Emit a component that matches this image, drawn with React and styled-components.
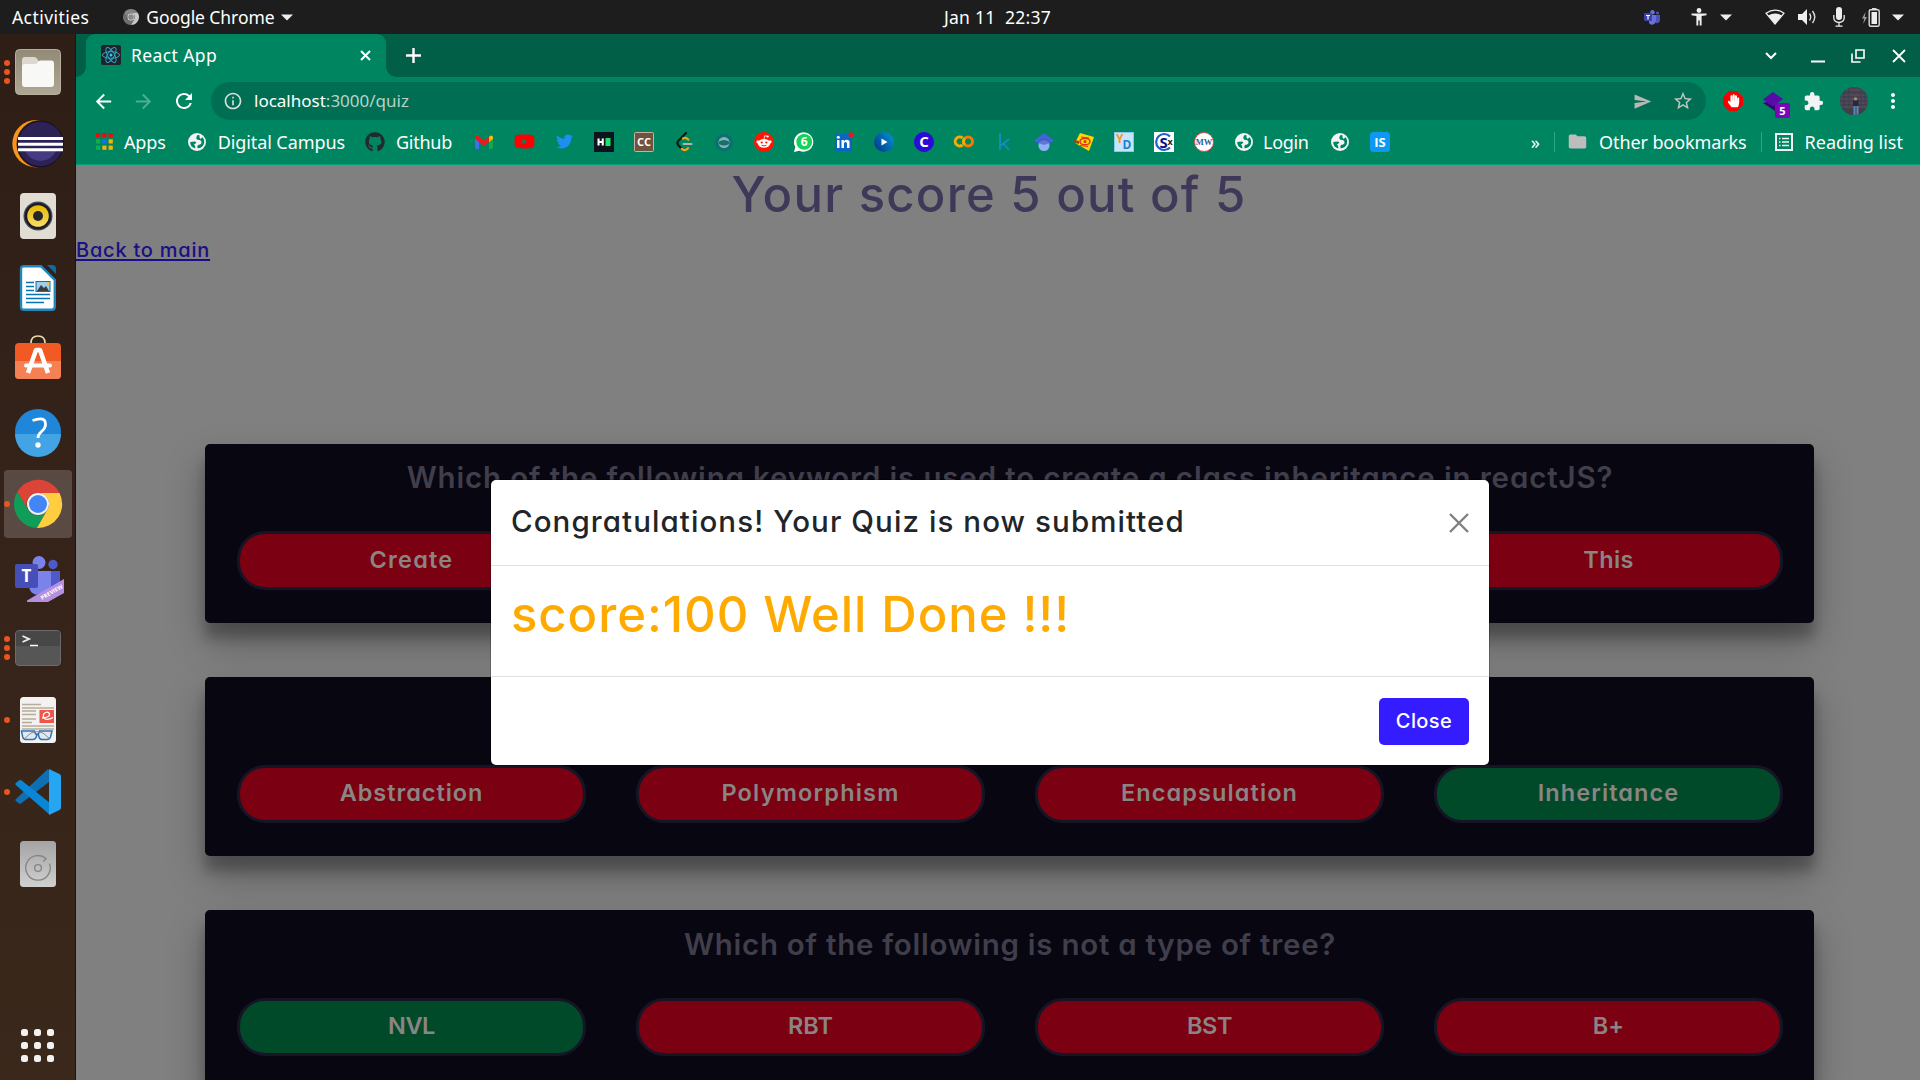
import React from "react";
import styled, { createGlobalStyle } from "styled-components";
import { FaGithub, FaYoutube, FaTwitter, FaHandPaper } from "react-icons/fa";
import { MdExtension, MdStarBorder, MdSend, MdRefresh, MdArrowBack, MdArrowForward, MdInfoOutline, MdFolder, MdMoreVert } from "react-icons/md";

const UI = `"Noto Sans", "Open Sans", sans-serif`;
const BODY = `Inter, "Open Sans", sans-serif`;

const Global = createGlobalStyle`
  * { box-sizing: border-box; }
  html, body { margin: 0; padding: 0; background: #808080; overflow: hidden; }
  svg { display: block; flex: none; overflow: visible; }
`;

const Desktop = styled.div`
  width: 1920px;
  height: 1080px;
  display: flex;
  flex-direction: column;
  overflow: hidden;
  position: relative;
  font-family: ${UI};
`;

const Text = styled.span`
  white-space: pre;
  font-size: ${(p) => p.$size || 18}px;
  letter-spacing: ${(p) => p.$ls || 0}px;
  color: ${(p) => p.$color || "#fff"};
  line-height: 24px;
`;

/* ---------- system bar ---------- */
const SystemBar = styled.header`
  height: 34px;
  flex: none;
  background: #1d1d1d;
  display: grid;
  grid-template-columns: 932px auto 1fr;
  align-items: center;
  padding: 0 16px 0 12px;
`;
const SysLeft = styled.div`
  display: flex;
  align-items: center;
`;
const SysRight = styled(SysLeft)`
  justify-content: flex-end;
`;
const Gap = styled.i`
  flex: none;
  width: ${(p) => p.$w}px;
`;

/* ---------- dock ---------- */
const Main = styled.div`
  flex: 1;
  display: flex;
  min-height: 0;
`;
const Dock = styled.nav`
  width: 76px;
  flex: none;
  background: linear-gradient(#2e1e15, #35231a 45%, #3a281b);
  border-right: 1px solid #1b1410;
  padding-top: 2px;
  display: flex;
  flex-direction: column;
`;
const DockItem = styled.div`
  height: 72px;
  flex: none;
  display: flex;
  align-items: center;
  justify-content: center;
  position: relative;
`;
const DockTile = styled.div`
  width: 68px;
  height: 68px;
  margin-left: 1px;
  padding-top: ${(p) => Math.max(0, p.$shift) * 2}px;
  padding-bottom: ${(p) => Math.max(0, -p.$shift) * 2}px;
  border-radius: 4px;
  display: flex;
  align-items: center;
  justify-content: center;
  background: ${(p) => (p.$active ? "rgba(255,255,255,.18)" : "transparent")};
`;
const Dots = styled.div`
  position: absolute;
  left: 4px;
  top: 0;
  bottom: 0;
  display: flex;
  flex-direction: column;
  justify-content: center;
  gap: 3px;
`;
const Dot = styled.i`
  width: 6px;
  height: 6px;
  border-radius: 50%;
  background: #e95420;
`;
const AppGrid = styled.div`
  margin: auto 0 18px 21px;
  display: grid;
  grid-template-columns: repeat(3, 7px);
  gap: 6px 6px;
`;
const GridDot = styled.i`
  height: 7px;
  border-radius: 2.5px;
  background: #f2f2f2;
`;

/* ---------- browser ---------- */
const Browser = styled.div`
  flex: 1;
  min-width: 0;
  display: flex;
  flex-direction: column;
`;
const TabStrip = styled.div`
  height: 43px;
  flex: none;
  background: #005f46;
  display: flex;
  align-items: center;
`;
const Flare = styled.i`
  width: 10px;
  height: 43px;
  flex: none;
  background: radial-gradient(circle at ${(p) => (p.$right ? "100%" : "0")} calc(100% - 10px), transparent 9.5px, #008561 10px);
  clip-path: inset(33px 0 0 0);
`;
const Tab = styled.div`
  width: 300px;
  height: 43px;
  flex: none;
  border-radius: 9px 9px 0 0;
  background: #008561;
  display: flex;
  align-items: center;
  justify-content: space-between;
  padding: 0 15px 1px;
`;
const TabLabel = styled.div`
  display: flex;
  align-items: center;
  gap: 10px;
`;
const RightGroup = styled.div`
  margin-left: auto;
  display: flex;
  align-items: center;
`;
const WinControls = styled(RightGroup)`
  padding-right: 14px;
`;
const Toolbar = styled.div`
  height: 49px;
  flex: none;
  background: #008561;
  display: flex;
  align-items: center;
  padding: 0 14px 1px 16px;
`;
const Omnibox = styled.div`
  width: 1495px;
  flex: none;
  height: 38px;
  border-radius: 19px;
  background: #006e52;
  display: flex;
  align-items: center;
  padding: 0 12px;
`;
const Bookmarks = styled.div`
  height: 39px;
  flex: none;
  background: #008561;
  border-bottom: 1px solid #00a07a;
  display: flex;
  align-items: center;
  padding: 0 17px 7px 20px;
`;
const Favicons = styled.div`
  display: flex;
  align-items: center;
  margin-left: 12px;
`;
const FavCell = styled.div`
  width: 40px;
  display: flex;
  justify-content: center;
`;
const Separator = styled.i`
  width: 1px;
  height: 20px;
  background: #2fa585;
`;
const ExtBadge = styled.div`
  position: absolute;
  left: 12px;
  top: 12px;
  width: 15px;
  height: 15px;
  border-radius: 2px;
  background: #7b06b8;
  color: #fff;
  font: 700 11px/15px ${UI};
  text-align: center;
`;
const Ext = styled.div`
  position: relative;
  width: 20px;
  height: 20px;
`;

/* ---------- page ---------- */
const Page = styled.main`
  flex: 1;
  min-height: 0;
  overflow: hidden;
  background: #808080;
  font-family: ${BODY};
  font-feature-settings: "cv11", "calt" 0;
  display: flex;
  flex-direction: column;
`;
const Score = styled.h1`
  margin: 0;
  padding-right: 18px;
  text-align: center;
  font-size: 49px;
  font-weight: 500;
  line-height: 59px;
  letter-spacing: 1.25px;
  color: #3f3858;
  white-space: pre;
`;
const BackLink = styled.a`
  align-self: flex-start;
  margin-top: 11px;
  font-size: 20px;
  font-weight: 500;
  line-height: 30px;
  letter-spacing: 0.78px;
  color: #1a0f86;
  text-decoration: underline;
  text-underline-offset: 2px;
  white-space: pre;
`;
const Cards = styled.div`
  margin: 178.8px 106px 0 129px;
  display: flex;
  flex-direction: column;
  gap: 54.5px;
`;
const Card = styled.section`
  height: 178.8px;
  flex: none;
  border-radius: 5px;
  background: #070611;
  padding: 15.5px 31px 0 32px;
  box-shadow: 0 19px 38px rgba(0, 0, 0, 0.3), 0 15px 12px rgba(0, 0, 0, 0.22);
`;
const Question = styled.h3`
  margin: 0 0 36px;
  height: 36px;
  line-height: 36px;
  font-size: 29.5px;
  font-weight: 600;
  letter-spacing: ${(p) => p.$ls}px;
  text-align: center;
  color: #413e4c;
  white-space: pre;
`;
const Answers = styled.div`
  display: grid;
  grid-template-columns: repeat(4, 1fr);
  column-gap: 50px;
`;
const Answer = styled.div`
  height: 58.5px;
  border: 3px solid #161526;
  border-radius: 28px;
  background: ${(p) => (p.$right ? "#004a2a" : "#7a0012")};
  color: #8a8583;
  display: flex;
  align-items: center;
  justify-content: center;
  padding-bottom: 3px;
  font-size: 23.5px;
  font-weight: 600;
  letter-spacing: ${(p) => p.$ls}px;
`;

/* ---------- modal ---------- */
const Modal = styled.div`
  position: absolute;
  left: 491px;
  top: 480px;
  width: 998px;
  height: 285px;
  border-radius: 5px;
  background: #fff;
  box-shadow: 0 0 0 1px rgba(0, 0, 0, 0.2);
  display: flex;
  flex-direction: column;
  font-family: ${BODY};
  font-feature-settings: "cv11", "calt" 0;
`;
const ModalHeader = styled.div`
  height: 86px;
  padding: 0 20px;
  border-bottom: 1px solid #dee2e6;
  display: flex;
  align-items: center;
  justify-content: space-between;
`;
const ModalTitle = styled.div`
  font-size: 29.5px;
  font-weight: 500;
  line-height: 45px;
  padding-bottom: 3px;
  letter-spacing: 1.08px;
  color: #212529;
  white-space: pre;
`;
const ModalBody = styled.div`
  height: 110px;
  padding: 19px 20px;
  font-size: 49px;
  font-weight: 500;
  line-height: 60px;
  letter-spacing: 0.97px;
  color: #ffaa00;
  white-space: pre;
`;
const ModalFooter = styled.div`
  flex: 1;
  padding: 0 20px;
  border-top: 1px solid #dee2e6;
  display: flex;
  align-items: center;
  justify-content: flex-end;
`;
const CloseButton = styled.button`
  width: 90px;
  height: 47px;
  padding: 0;
  border: 0;
  border-radius: 5px;
  background: #351cff;
  color: #fff;
  font: 500 20px/30px ${BODY};
  letter-spacing: 0.4px;
`;

/* ---------- icons ---------- */
const Caret = () => (
  <svg width="12" height="7" viewBox="0 0 12 7"><path d="M0 .5h12L6 6.5z" fill="#eee" /></svg>
);
const ChromeGrey = () => (
  <svg width="16" height="16" viewBox="0 0 48 48">
    <path d="M24 12H44.8A24 24 0 0 0 3.2 12L13.6 30A12 12 0 0 1 24 12z" fill="#858585" />
    <path d="M3.2 12A24 24 0 0 0 24 48L34.4 30A12 12 0 0 1 13.6 30z" fill="#6f6f6f" />
    <path d="M44.8 12A24 24 0 0 1 24 48L34.4 30A12 12 0 0 0 24 12z" fill="#c8c8c8" />
    <circle cx="24" cy="24" r="11" fill="#ddd" /><circle cx="24" cy="24" r="8.500" fill="#888" />
  </svg>
);
const TeamsTray = () => (
  <svg width="16" height="15" viewBox="0 0 16 15">
    <circle cx="8.5" cy="2.2" r="2.2" fill="#6a6fe0" /><circle cx="13.5" cy="3" r="1.6" fill="#4b53bc" />
    <path d="M10 5h6v5a3 3 0 0 1-4 3z" fill="#4b53bc" /><path d="M5 5h7v6a3.8 3.8 0 0 1-7 2z" fill="#6a71dc" />
    <rect y="3" width="8" height="8" rx="1" fill="#3b42a8" />
    <path d="M2 5h4v1H4.6v3.6H3.4V6H2z" fill="#fff" />
  </svg>
);
const Person = () => (
  <svg width="16" height="18" viewBox="0 0 16 18" fill="#eee">
    <circle cx="8" cy="2.5" r="2.4" /><path d="M.5 5.5h15v1.7L10.6 8v9.6H8.7v-5H7.3v5H5.4V8L.5 7.2z" />
  </svg>
);
const Wifi = () => (
  <svg width="20" height="16" viewBox="0 0 20 16">
    <path d="M1 4.2Q10-2 19 4.2L10 15z" fill="none" stroke="#eee" strokeWidth="1.3" />
    <path d="M3.2 6.6Q10 2.2 16.8 6.6L10 15z" fill="#eee" />
  </svg>
);
const Volume = () => (
  <svg width="19" height="16" viewBox="0 0 19 16">
    <path d="M0 5h4l5-5v16l-5-5H0z" fill="#eee" />
    <path d="M11.5 4.500q2.400 3.500 0 7M14.500 2q4.500 6 0 12" fill="none" stroke="#ddd" strokeWidth="1.400" />
  </svg>
);
const Mic = () => (
  <svg width="12" height="20" viewBox="0 0 12 20">
    <rect x="3" y="0" width="6" height="13" rx="3" fill="#eee" />
    <path d="M.8 8v3a5.2 4.5 0 0 0 10.4 0V8M6 16v3M2.5 19.2h7" fill="none" stroke="#eee" strokeWidth="1.3" />
  </svg>
);
const Battery = () => (
  <svg width="18" height="19" viewBox="0 0 18 19">
    <path d="M3.5 4L0 10.500h2.200L1.200 16 5 9H2.800z" fill="#999" />
    <rect x="7.2" y="1.800" width="10" height="16.500" rx="1.500" fill="none" stroke="#ddd" strokeWidth="1.400" />
    <rect x="9.500" y="4" width="5.500" height="12" fill="#eee" /><rect x="10" y="0" width="4.500" height="1.600" fill="#ddd" />
  </svg>
);

const FilesIcon = () => (
  <svg width="46" height="46" viewBox="0 0 46 46">
    <defs><linearGradient id="fi" x1="0" y1="0" x2="0" y2="1"><stop stopColor="#918a77" /><stop offset="1" stopColor="#aea794" /></linearGradient></defs>
    <rect x=".5" y=".5" width="45" height="45" rx="4" fill="url(#fi)" stroke="#b5ae9e" />
    <path d="M7 18V11q0-3 3-3h9q2 0 3 1.500l1.500 2.500H36v8H7z" fill="#dcd8ce" />
    <path d="M7 18q0-3 3-3h10q1.500 0 2.500-1.500T25 11.500h11q3 0 3 3V35q0 3-3 3H10q-3 0-3-3z" fill="#f8f8f7" />
  </svg>
);
const EclipseIcon = () => (
  <svg width="52" height="48" viewBox="0 0 52 48">
    <circle cx="24" cy="23.700" r="23.700" fill="#f7941e" />
    <circle cx="28.500" cy="24" r="24" fill="#2f1f17" />
    <circle cx="28.500" cy="24" r="22.700" fill="#2c2255" stroke="#130f26" strokeWidth="1" />
    <path d="M13 31h31a17 17 0 0 1-31 0z" fill="#463a82" />
    <path d="M6 17h45v3H6zM6 22.700h45v3H6zM6 28.300h45v3H6z" fill="#fff" />
  </svg>
);
const RhythmIcon = () => (
  <svg width="36" height="46" viewBox="0 0 36 46">
    <defs><linearGradient id="rh" x1="0" y1="0" x2="0" y2="1"><stop stopColor="#e6b800" /><stop offset="1" stopColor="#f8dc6a" /></linearGradient></defs>
    <rect width="36" height="46" rx="4" fill="#e2ddd2" /><circle cx="18" cy="23" r="14.500" fill="#4a4d5c" />
    <circle cx="18" cy="23" r="13.300" fill="#1b1c26" /><circle cx="18" cy="23" r="10.800" fill="url(#rh)" /><circle cx="18" cy="23" r="5" fill="#23252b" />
  </svg>
);
const WriterIcon = () => (
  <svg width="36" height="46" viewBox="0 0 36 46">
    <path d="M4 1.200H21L34.800 15v26.800q0 3-3 3H4q-3 0-3-3V4.200q0-3 3-3z" fill="#fff" stroke="#2087bd" strokeWidth="2.400" />
    <path d="M27 0h5q4 0 4 4v5z" fill="#0c6ba5" />
    <path d="M6 17.500h8M6 21.500h8M6 25.500h8M6 29.500h24M6 33.500h24M6 37.500h18" stroke="#0a71b0" strokeWidth="1.300" />
    <rect x="16" y="16.500" width="14" height="10" fill="#9bd0ee" stroke="#0a71b0" /><path d="M17 26l4-6 3 3 2-2 3 5z" fill="#3d3d3d" /><circle cx="28" cy="18.500" r="1.500" fill="#f4c430" />
  </svg>
);
const SoftwareIcon = () => (
  <svg width="46" height="44" viewBox="0 0 46 44">
    <path d="M16 10V8q0-7 7-7t7 7v2" fill="none" stroke="#ecd9a8" strokeWidth="1.700" />
    <rect y="8" width="46" height="36" rx="4" fill="#f15a22" /><path d="M0 26h46v14q0 4-4 4H4q-4 0-4-4z" fill="#f58053" />
    <path d="M13 38l8-23h4l8 23" fill="none" stroke="#fff" strokeWidth="4.500" strokeLinejoin="round" /><rect x="9" y="28.500" width="28" height="4" rx="2" fill="#fff" />
  </svg>
);
const HelpIcon = () => (
  <svg width="46" height="46" viewBox="0 0 46 46">
    <circle cx="23" cy="23" r="23" fill="#1f86d9" /><path d="M0 25a23 23 0 0 0 46 0z" fill="#42a4e4" />
    <path d="M17.500 11.500q13.500-5 13 4.500-.3 3.500-4 6.500-3.500 3-3.500 6.500" fill="none" stroke="#fff" strokeWidth="2.800" /><circle cx="23" cy="36" r="2.700" fill="#fff" />
  </svg>
);
const ChromeIcon = () => (
  <svg width="48" height="48" viewBox="0 0 48 48">
    <path d="M24 13H45.500A24 24 0 0 0 3.200 12L14 29.500A11 11 0 0 1 24 13z" fill="#db4437" />
    <path d="M3.200 12A24 24 0 0 0 23 48L33.500 29.500A11 11 0 0 1 14 29.500z" fill="#0f9d58" />
    <path d="M45.500 13A24 24 0 0 1 23 48L33.500 29.500A11 11 0 0 0 24 13z" fill="#ffcd40" />
    <circle cx="24" cy="24" r="11" fill="#f1f1f1" /><circle cx="24" cy="24" r="9" fill="#4285f4" />
  </svg>
);
const TeamsIcon = () => (
  <svg width="46" height="46" viewBox="0 0 46 46">
    <circle cx="24" cy="6.500" r="6.500" fill="#7b83eb" /><circle cx="38" cy="8.500" r="4.700" fill="#5059c9" />
    <path d="M34 15h11v20H34z" fill="#5059c9" /><path d="M14 15h22v14q0 10-11 10T14 29z" fill="#7b83eb" />
    <rect y="8" width="23" height="24" rx="2" fill="#464eb8" />
    <text x="11.500" y="26" textAnchor="middle" fontFamily="Open Sans" fontWeight="700" fontSize="17" fill="#fff">T</text>
    <path d="M12 44.500L49 23v14L33 46H12z" fill="#b38fe0" />
    <text transform="translate(27 44) rotate(-30)" fontFamily="Open Sans" fontWeight="700" fontSize="5.600" fill="#fff">PREVIEW</text>
  </svg>
);
const TerminalIcon = () => (
  <svg width="46" height="36" viewBox="0 0 46 36">
    <rect x=".5" y=".5" width="45" height="35" rx="3.500" fill="#565656" stroke="#6b6b6b" /><path d="M1 16V4q0-3 3-3h38q3 0 3 3v12z" fill="#474747" />
    <path d="M7.500 6l6.500 3-6.500 3" fill="none" stroke="#eee" strokeWidth="1.900" /><path d="M15 15.500h8" stroke="#fff" strokeWidth="1.500" />
  </svg>
);
const EvinceIcon = () => (
  <svg width="36" height="46" viewBox="0 0 36 46">
    <rect width="36" height="46" rx="3.500" fill="#f3f2f0" />
    <path d="M2 7.500h19M2 11h32M2 14h14M2 17.500h14M2 22h14M2 25.500h10M2 29h32M2 32h32" stroke="#b5ad9c" strokeWidth="1.300" />
    <rect x="19.500" y="13" width="14.500" height="13" fill="#f0554a" /><path d="M22 21q8-.5 7.500-4-.7-2.500-4-1.500-3.500 2-1.500 5.500 3 3 9-.5" fill="none" stroke="#fff" strokeWidth="1.300" />
    <path d="M1.500 34h13l1 3h3l1-3h12.500l-1.500 6q-.7 2.500-3.500 2.500h-4.500q-3 0-3.500-2.500l-.8-3h-1l-1 3q-.7 2.500-3.500 2.500H6.500Q3.300 42.500 2.700 40z" fill="#d5e4f2" fillOpacity=".6" stroke="#3273b8" strokeWidth="1.500" />
    <path d="M4 42l7-6q6-3 12 0l7 6" fill="none" stroke="#8a8a8a" strokeWidth="1" />
  </svg>
);
const CodeIcon = () => (
  <svg width="46" height="46" viewBox="0 0 46 46">
    <path d="M1 30L33 0l5 10-4 3L6 34.500q-1 .7-2 0L.8 32q-1-1 .2-2z" fill="#0f6fb3" />
    <path d="M.8 14L4.300 11.300q1-.6 2 0L35 34v12L.8 16q-1-1 0-2z" fill="#0a86d6" />
    <path d="M34 0L44.500 5q1.500.8 1.500 2.500v31q0 1.700-1.500 2.500L34 46z" fill="#26a5f2" />
  </svg>
);
const DiskIcon = () => (
  <svg width="36" height="46" viewBox="0 0 36 46">
    <defs><linearGradient id="dk" x1="0" y1="0" x2="0" y2="1"><stop stopColor="#a4a4a4" /><stop offset="1" stopColor="#d0d0d0" /></linearGradient></defs>
    <rect width="36" height="46" rx="3.500" fill="url(#dk)" />
    <path d="M29.500 22.500A12.300 12.300 0 1 1 26 17.500l-2.500 3" fill="none" stroke="#858585" strokeWidth="1.400" /><circle cx="18" cy="27" r="3.400" fill="none" stroke="#858585" strokeWidth="1.400" />
  </svg>
);

const ReactFav = () => (
  <svg width="20" height="20" viewBox="0 0 20 20">
    <rect width="20" height="20" rx="2" fill="#20232a" /><circle cx="10" cy="10" r="1.500" fill="#3cc9ef" />
    <g fill="none" stroke="#2fa6c6" strokeWidth="1"><ellipse cx="10" cy="10" rx="8.500" ry="3.300" /><ellipse cx="10" cy="10" rx="8.500" ry="3.300" transform="rotate(60 10 10)" /><ellipse cx="10" cy="10" rx="8.500" ry="3.300" transform="rotate(120 10 10)" /></g>
  </svg>
);
const AppsIcon = () => (
  <svg width="17" height="17" viewBox="0 0 17 17">
    {["#f00b0b", "#f00b0b", "#f00b0b", "#0fae50", "#1473f5", "#f5b400", "#0fae50", "#f5b400", "#f5b400"].map((c, i) => (
      <rect key={i} x={(i % 3) * 6.3} y={Math.floor(i / 3) * 6.3} width="4.200" height="4.200" fill={c} />
    ))}
  </svg>
);
const Globe = () => (
  <svg width="18" height="18" viewBox="0 0 18 18">
    <circle cx="9" cy="9" r="9" fill="#f1f3f4" />
    <path d="M9.500 2Q8 4 8.300 5.500 9 7 11.500 7q2 .3 2 2.300.2 2-1.500 2.200l-2 .5q-1 1-.5 3.300 4.500 0 6.300-4Q17 7 14.500 4.300L12.500 6l-1-1.500V2.300zM2.200 9q0 5 5 6.600V13L6 11.500l2.500-1.800L7 8.500z" fill="#008561" />
  </svg>
);
const Gmail = () => (
  <svg width="18" height="14" viewBox="0 0 18 14">
    <path d="M0 3v9.500Q0 14 1.500 14H4V6z" fill="#4070f0" /><path d="M18 3v9.500q0 1.500-1.500 1.500H14V6z" fill="#18a550" />
    <path d="M14 2v5l4-3V2q-1-2.500-3-1z" fill="#fbbc04" /><path d="M4 1.500L9 5.500l5-4V7L9 11 4 7 0 4V2q.8-2.500 3-1.200z" fill="#e51c1c" />
  </svg>
);
const LetterFav = ({ bg, fg, children, rx = 1, size = 11, border, serif }) => (
  <svg width="20" height="20" viewBox="0 0 20 20">
    <rect x=".5" y=".5" width="19" height="19" rx={rx} fill={bg} stroke={border || bg} />
    <text x="10" y={10 + size * 0.36} textAnchor="middle" fontFamily={serif ? "Liberation Serif" : "Open Sans"} fontWeight="700" fontSize={size} fill={fg}>{children}</text>
  </svg>
);
const HackerRank = () => (
  <svg width="20" height="20" viewBox="0 0 20 20"><rect width="20" height="20" fill="#0e141e" /><path d="M3.500 6.500H5.600V9H7.700V6.500H9.800V13.500H7.700V11H5.600v2.500H3.500z" fill="#fff" /><rect x="11.500" y="6" width="5" height="8" fill="#1be56b" /></svg>
);
const Leet = () => (
  <svg width="17" height="20" viewBox="0 0 17 20" fill="none" strokeWidth="2.200" strokeLinecap="round">
    <path d="M10 1L2.200 9Q.6 11 2.200 13l3.500 3.800" stroke="#0c1a16" /><path d="M5.700 16.800q2.300 2.500 5 .6l1.300-1.200M7 6.500q2.500-1.500 4.500.5l.8.700" stroke="#f5a40c" /><path d="M7.500 12H15.500" stroke="#b3b3b3" />
  </svg>
);
const Teal = () => (
  <svg width="20" height="20" viewBox="0 0 20 20"><circle cx="10" cy="10.500" r="9" fill="#0b7071" /><circle cx="10" cy="10.500" r="5.500" fill="#87b5ad" /><path d="M5 9.500q5-3 10 0v2.500q-5 3-10 0z" fill="#15706f" /></svg>
);
const Reddit = () => (
  <svg width="20" height="20" viewBox="0 0 20 20"><circle cx="10" cy="10" r="10" fill="#ff1500" /><circle cx="3.900" cy="9.800" r="1.500" fill="#fff" /><circle cx="16.100" cy="9.800" r="1.500" fill="#fff" /><circle cx="13.700" cy="4.500" r="1.100" fill="#fff" /><path d="M10 7l.8-3.300 2.500.6" stroke="#fff" fill="none" strokeWidth=".8" /><ellipse cx="10" cy="11.300" rx="6.200" ry="4.400" fill="#fff" /><circle cx="7.700" cy="10.500" r="1.100" fill="#ff1500" /><circle cx="12.300" cy="10.500" r="1.100" fill="#ff1500" /><path d="M7.500 13.200q2.500 1.500 5 0" stroke="#ff1500" fill="none" strokeWidth=".9" /></svg>
);
const Whats = () => (
  <svg width="20" height="20" viewBox="0 0 20 20"><path d="M0 20l1.300-5A9.700 9.700 0 1 1 5.300 18.700z" fill="#fff" /><circle cx="10.200" cy="9.900" r="7.900" fill="#12d35a" /><text x="10.200" y="14.300" textAnchor="middle" fontFamily="Open Sans" fontWeight="700" fontSize="12" fill="#fff">6</text></svg>
);
const LinkedIn = () => (
  <svg width="20" height="20" viewBox="0 0 20 20"><rect x="1" y="2" width="17" height="17" rx="1" fill="#0a66c2" /><path d="M3 8h2.500v8H3zM7.500 8h2.400v1.200Q13 6.500 15.500 9.300V16H13v-4.500q-1.300-2.500-3-.5v5H7.500z" fill="#fff" /><circle cx="4.300" cy="5.300" r="1.500" fill="#fff" /><circle cx="17" cy="2.800" r="2.500" fill="#f0141e" /></svg>
);
const Play = () => (
  <svg width="20" height="20" viewBox="0 0 20 20"><defs><linearGradient id="pl" x1="0" y1=".7" x2="1" y2="0"><stop stopColor="#023e8c" /><stop offset="1" stopColor="#0398d8" /></linearGradient></defs><circle cx="10" cy="10" r="10" fill="url(#pl)" /><path d="M7.500 6.500l6 3.500-6 3.500z" fill="#fff" /></svg>
);
const Colab = () => (
  <svg width="20" height="13" viewBox="0 0 20 13" fill="none" strokeWidth="2.900"><path d="M8.500 3A4.500 4.500 0 1 0 8.500 10" stroke="#f9ab00" /><circle cx="14" cy="6.500" r="4.500" stroke="#f57c00" /><path d="M10.800 9.700A4.500 4.500 0 0 1 10.800 3.300" stroke="#f9ab00" /></svg>
);
const Kaggle = () => (
  <svg width="11" height="18" viewBox="0 0 11 18"><path d="M1 0v17M10 6L2 12.500M4.500 10.500L10 17" stroke="#0f8fc5" strokeWidth="1.900" fill="none" /></svg>
);
const Scholar = () => (
  <svg width="20" height="18" viewBox="0 0 20 18"><path d="M10 0l10 7.500-10 7L0 7.500z" fill="#4164d8" /><circle cx="10" cy="12.500" r="5.500" fill="#8fb0f7" /><path d="M4.500 10a5.700 5.700 0 0 1 11 0l-5.500 2z" fill="#3c53b8" opacity=".6" /></svg>
);
const Yellow = () => (
  <svg width="20" height="20" viewBox="0 0 20 20"><path d="M6 1l14 4-5 14L1 11z" fill="#ffd600" /><ellipse cx="11" cy="9.500" rx="5" ry="3.300" fill="none" stroke="#e0341a" strokeWidth="1.500" /><circle cx="11" cy="9.500" r="1.500" fill="#e0341a" /><path d="M0 8l5 1v3l-4-1z" fill="#a5440f" /><path d="M7 5l8 1M6 13.500l8 1" stroke="#e0341a" strokeWidth="1" /></svg>
);
const YD = () => (
  <svg width="20" height="20" viewBox="0 0 20 20"><rect x=".5" y=".5" width="19" height="19" fill="#c5e6fa" stroke="#8cc6ee" /><g fontFamily="Open Sans" fontWeight="700"><text x="2" y="11" fontSize="12" fill="#f7941e">Y</text><text x="8.500" y="17" fontSize="12" fill="#1e7fd0">D</text></g></svg>
);
const CSx = () => (
  <svg width="20" height="20" viewBox="0 0 20 20"><rect width="20" height="20" fill="#fff" /><path d="M16 4.500A8 8 0 1 0 16 15.500" fill="none" stroke="#1763c7" strokeWidth="2.200" /><g fontFamily="Open Sans" fontWeight="700"><text x="5.500" y="15.500" fontSize="15" fill="#10107a">S</text><text x="13.500" y="13" fontSize="9" fill="#222">x</text></g></svg>
);
const ReadingIcon = () => (
  <svg width="18" height="18" viewBox="0 0 18 18" fill="none" stroke="#f1f3f4"><rect x="1" y="1" width="16" height="16" strokeWidth="2" /><path d="M4 5.500h1.500M4 9h1.500M4 12.500h1.500M7 5.500h7M7 9h7M7 12.500h7" strokeWidth="1.500" /></svg>
);
const AdBlock = () => (
  <svg width="20" height="20" viewBox="0 0 20 20"><path d="M6 0h8l6 6v8l-6 6H6l-6-6V6z" fill="#f70000" /><g transform="translate(4 3.300)"><FaHandPaper size={13} color="#fff" /></g></svg>
);
const Layers = () => (
  <svg width="20" height="20" viewBox="0 0 20 20"><path d="M0 12l10-3 8 8-6 3z" fill="#2c0a6e" /><path d="M10 1l10 7-10 7.500L0 8.500z" fill="#5a0aa8" /></svg>
);
const Avatar = () => (
  <svg width="28" height="28" viewBox="0 0 28 28">
    <defs><clipPath id="av"><circle cx="14" cy="14" r="14" /></clipPath></defs>
    <g clipPath="url(#av)"><rect width="28" height="28" fill="#45414f" /><path d="M0 3h28M0 8h28M0 12h28M0 16h28M0 20h28" stroke="#564c58" strokeWidth="1.300" /><path d="M4 0v20M9 2v18M21 0v18M25 0v18" stroke="#3a3f58" strokeWidth="1" /><path d="M0 21h28v7H0z" fill="#404049" /><circle cx="15.500" cy="12" r="1.700" fill="#b08a78" /><rect x="13" y="13.500" width="5.500" height="5.500" fill="#272a3a" /><path d="M13.500 19h2v9h-2zM16.500 19h2v9h-2z" fill="#5a86bb" /></g>
  </svg>
);
const Stroke = ({ w, h, d, sw = 2, color = "#fff" }) => (
  <svg width={w} height={h} viewBox={`0 0 ${w} ${h}`}><path d={d} fill="none" stroke={color} strokeWidth={sw} /></svg>
);

const dock = [
  { Icon: FilesIcon, windows: 3 },
  { Icon: EclipseIcon },
  { Icon: RhythmIcon },
  { Icon: WriterIcon },
  { Icon: SoftwareIcon, shift: -3 },
  { Icon: HelpIcon },
  { Icon: ChromeIcon, windows: 1, active: true },
  { Icon: TeamsIcon, shift: 3 },
  { Icon: TerminalIcon, windows: 3 },
  { Icon: EvinceIcon, windows: 1 },
  { Icon: CodeIcon, windows: 1 },
  { Icon: DiskIcon },
];

const favs = [
  <Gmail />, <FaYoutube size={21} color="#f00" />, <FaTwitter size={17} color="#1d8ff0" />, <HackerRank />,
  <LetterFav bg="#70533e" fg="#fff" border="#c9b3a0" size={11}>CC</LetterFav>, <Leet />, <Teal />, <Reddit />, <Whats />,
  <LinkedIn />, <Play />, <LetterFav bg="#2a0bd8" fg="#fff" rx={9.5} size={15}>C</LetterFav>, <Colab />, <Kaggle />, <Scholar />,
  <Yellow />, <YD />, <CSx />, <LetterFav bg="#fff" fg="#2a5f9e" border="#e0474c" rx={9.5} serif size={8.5}>MW</LetterFav>,
];

const cards = [
  {
    question: "Which of the following keyword is used to create a class inheritance in reactJS?",
    spacing: 0.85,
    answers: [["Create", 1.2], ["", 0], ["", 0], ["This", 0.4]],
    correct: -1,
  },
  {
    question: "",
    spacing: 0,
    answers: [["Abstraction", 0.95], ["Polymorphism", 1.2], ["Encapsulation", 1.1], ["Inheritance", 1.1]],
    correct: 3,
  },
  {
    question: "Which of the following is not a type of tree?",
    spacing: 0.74,
    answers: [["NVL", -0.4], ["RBT", 0], ["BST", -0.4], ["B+", 0]],
    correct: 0,
  },
];

export default function App() {
  return (
    <Desktop>
      <Global />
      <SystemBar>
        <SysLeft>
          <Text $size={17.5} $ls={0.44}>Activities</Text><Gap $w={34} /><ChromeGrey /><Gap $w={7} />
          <Text $size={17.5} $ls={-0.08}>Google Chrome</Text><Gap $w={7} /><Caret />
        </SysLeft>
        <Text $size={17.5} $ls={0.25}>Jan 11  22:37</Text>
        <SysRight>
          <TeamsTray /><Gap $w={31} /><Person /><Gap $w={13} /><Caret /><Gap $w={33} /><Wifi /><Gap $w={13} /><Volume />
          <Gap $w={16} /><Mic /><Gap $w={17} /><Battery /><Gap $w={12} /><Caret />
        </SysRight>
      </SystemBar>
      <Main>
        <Dock>
          {dock.map(({ Icon, windows = 0, active, shift = 0 }, i) => (
            <DockItem key={i}>
              {windows > 0 && <Dots>{Array.from({ length: windows }, (_, k) => <Dot key={k} />)}</Dots>}
              <DockTile $active={active} $shift={shift}><Icon /></DockTile>
            </DockItem>
          ))}
          <AppGrid>{Array.from({ length: 9 }, (_, k) => <GridDot key={k} />)}</AppGrid>
        </Dock>
        <Browser>
          <TabStrip>
            <Flare />
            <Tab>
              <TabLabel><ReactFav /><Text $size={17.5} $ls={0.4}>React App</Text></TabLabel>
              <Stroke w={11} h={11} d="M1 1l9 9M10 1l-9 9" />
            </Tab>
            <Flare $right />
            <Gap $w={10} />
            <Stroke w={15} h={15} d="M7.500 0v15M0 7.500h15" sw={2.4} />
            <WinControls>
              <Stroke w={12} h={8} d="M1 1l5 5 5-5" /><Gap $w={34} />
              <Stroke w={14} h={14} d="M0 12.500h14" /><Gap $w={26} />
              <Stroke w={14} h={14} d="M5 1h8v8H5zM1 4.500V13h8.500" sw={1.6} /><Gap $w={27} />
              <Stroke w={14} h={14} d="M1 1l12 12M13 1L1 13" sw={1.8} />
            </WinControls>
          </TabStrip>
          <Toolbar>
            <MdArrowBack size={23} color="#fff" /><Gap $w={17} /><MdArrowForward size={23} color="#4fae93" /><Gap $w={17} />
            <MdRefresh size={24} color="#fff" /><Gap $w={15} />
            <Omnibox>
              <MdInfoOutline size={20} color="#d5e0dc" /><Gap $w={11} />
              <Text $size={17}>localhost</Text><Text $size={17} $color="#b5d3c9">:3000/quiz</Text>
              <RightGroup><MdSend size={19} color="#b5b9b7" /><Gap $w={20} /><MdStarBorder size={22} color="#c0c5c3" /></RightGroup>
            </Omnibox>
            <Gap $w={17} /><AdBlock /><Gap $w={20} /><Ext><Layers /><ExtBadge>5</ExtBadge></Ext><Gap $w={20} />
            <MdExtension size={21} color="#f1f3f4" /><Gap $w={16} /><Avatar /><Gap $w={13} /><MdMoreVert size={24} color="#fff" />
          </Toolbar>
          <Bookmarks>
            <AppsIcon /><Gap $w={11} /><Text $ls={-0.15}>Apps</Text><Gap $w={22} /><Globe /><Gap $w={12} />
            <Text $ls={-0.09}>Digital Campus</Text><Gap $w={20} /><FaGithub size={20} color="#24292e" /><Gap $w={11} />
            <Text $ls={-0.25}>Github</Text>
            <Favicons>{favs.map((f, i) => <FavCell key={i}>{f}</FavCell>)}</Favicons>
            <Gap $w={11} /><Globe /><Gap $w={10} /><Text $ls={-0.3}>Login</Text><Gap $w={22} /><Globe /><Gap $w={21} />
            <LetterFav bg="#0d98f2" fg="#fff" rx={2.5} size={13}>IS</LetterFav>
            <RightGroup>
              <Text>»</Text><Gap $w={14} /><Separator /><Gap $w={12} /><MdFolder size={21} color="#bdbdbd" /><Gap $w={11} />
              <Text $ls={-0.1}>Other bookmarks</Text><Gap $w={14} /><Separator /><Gap $w={13} /><ReadingIcon /><Gap $w={12} />
              <Text>Reading list</Text>
            </RightGroup>
          </Bookmarks>
          <Page>
            <Score>Your score 5 out of 5</Score>
            <BackLink>Back to main</BackLink>
            <Cards>
              {cards.map((c, i) => (
                <Card key={i}>
                  <Question $ls={c.spacing}>{c.question}</Question>
                  <Answers>
                    {c.answers.map(([label, ls], k) => <Answer key={k} $right={k === c.correct} $ls={ls}>{label}</Answer>)}
                  </Answers>
                </Card>
              ))}
            </Cards>
          </Page>
        </Browser>
      </Main>
      <Modal>
        <ModalHeader>
          <ModalTitle>Congratulations! Your Quiz is now submitted</ModalTitle>
          <Stroke w={20} h={20} d="M1 1l18 18M19 1L1 19" sw={2.4} color="#808080" />
        </ModalHeader>
        <ModalBody>score:100 Well Done !!!</ModalBody>
        <ModalFooter><CloseButton>Close</CloseButton></ModalFooter>
      </Modal>
    </Desktop>
  );
}
